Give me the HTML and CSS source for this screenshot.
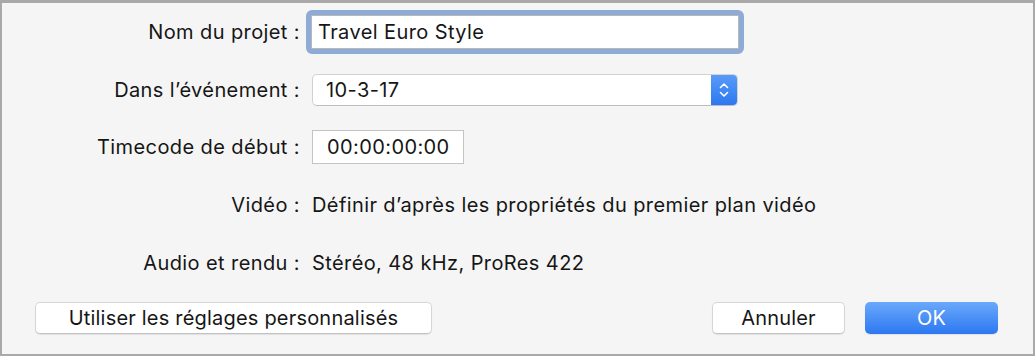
FILE: index.html
```html
<!DOCTYPE html>
<html lang="fr">
<head>
    <meta charset="UTF-8">
    <title>Nouveau projet</title>
    <link rel="stylesheet" href="styles.css">
</head>
<body>
    <div id="dialog">
        <div class="form">
            <div class="row">
                <div class="label">Nom du projet :</div>
                <div class="field focus">
                    <div class="input">Travel Euro Style</div>
                </div>
            </div>
            <div class="row">
                <div class="label">Dans l’événement :</div>
                <div class="field">
                    <div class="popup">
                        <span>10-3-17</span>
                        <span class="stepper">
                            <svg width="12" height="20" viewBox="0 0 12 20">
                                <path d="M2.5 7.5 L6 4 L9.5 7.5 M2.5 12.5 L6 16 L9.5 12.5" fill="none" stroke="#fff" stroke-width="1.6" stroke-linecap="round" stroke-linejoin="round"/>
                            </svg>
                        </span>
                    </div>
                </div>
            </div>
            <div class="row">
                <div class="label">Timecode de début :</div>
                <div class="field">
                    <div class="timecode">00:00:00:00</div>
                </div>
            </div>
            <div class="row">
                <div class="label">Vidéo :</div>
                <div class="value">Définir d’après les propriétés du premier plan vidéo</div>
            </div>
            <div class="row">
                <div class="label">Audio et rendu :</div>
                <div class="value">Stéréo, 48 kHz, ProRes 422</div>
            </div>
        </div>

        <!-- Buttons -->
        <div class="buttons">
            <button class="btn wide">Utiliser les réglages personnalisés</button>
            <div class="right">
                <button class="btn">Annuler</button>
                <button class="btn primary">OK</button>
            </div>
        </div>
    </div>
</body>
</html>
```

FILE: styles.css
```css
body {
    margin: 0;
    padding: 0;
    font-family: Inter, "Liberation Sans", sans-serif;
    color: #161616;
}

#dialog {
    width: 1035px;
    height: 356px;
    box-sizing: border-box;
    background-color: #f5f5f5;
    border: 2px solid #a9a9a9;
    border-top-width: 3px;
    display: flex;
    flex-direction: column;
}

.form {
    display: flex;
    flex-direction: column;
}

.row {
    display: flex;
    align-items: center;
    height: 57.75px;
    font-size: 20px;
    letter-spacing: 0.4px;
}

.label {
    width: 308px;
    text-align: right;
    padding-right: 10px;
    box-sizing: border-box;
}

.field {
    display: flex;
    align-items: center;
}

.value {
    padding-left: 2px;
}

.field.focus {
    border: 5px solid #8eabd8;
    border-radius: 6px;
    margin-left: -4px;
}

.input {
    width: 420px;
    height: 32px;
    line-height: 32px;
    background-color: #fff;
    border: 1px solid #b8b8b8;
    padding-left: 6px;
}

.popup {
    margin-left: 2px;
    width: 426px;
    height: 32px;
    box-sizing: border-box;
    background-color: #fff;
    border: 1px solid #d2d2d2;
    border-bottom-color: #bdbdbd;
    border-radius: 5px;
    display: flex;
    align-items: center;
    justify-content: space-between;
    padding-left: 13px;
    overflow: hidden;
}

.stepper {
    width: 26px;
    height: 32px;
    background: linear-gradient(#5a9cf8, #2b77f1);
    display: flex;
    align-items: center;
    justify-content: center;
}

.timecode {
    margin-left: 2px;
    width: 152px;
    height: 34px;
    box-sizing: border-box;
    line-height: 32px;
    background-color: #fff;
    border: 1px solid #c4c4c4;
    padding-left: 14px;
}

.buttons {
    display: flex;
    justify-content: space-between;
    align-items: center;
    padding: 10px 35px 0 33px;
}

.right {
    display: flex;
    gap: 20px;
}

.btn {
    height: 32px;
    font-family: inherit;
    font-size: 20px;
    letter-spacing: 0.2px;
    color: #161616;
    background-color: #fff;
    border: 1px solid #d6d6d6;
    border-bottom-color: #c2c2c2;
    border-radius: 5px;
    box-shadow: 0 1px 1px rgba(0, 0, 0, 0.08);
    padding: 0;
    width: 133px;
}

.btn.wide {
    width: 397px;
}

.btn.primary {
    color: #fff;
    border: none;
    background: linear-gradient(#6aa8fa, #2d78f2);
}
```
